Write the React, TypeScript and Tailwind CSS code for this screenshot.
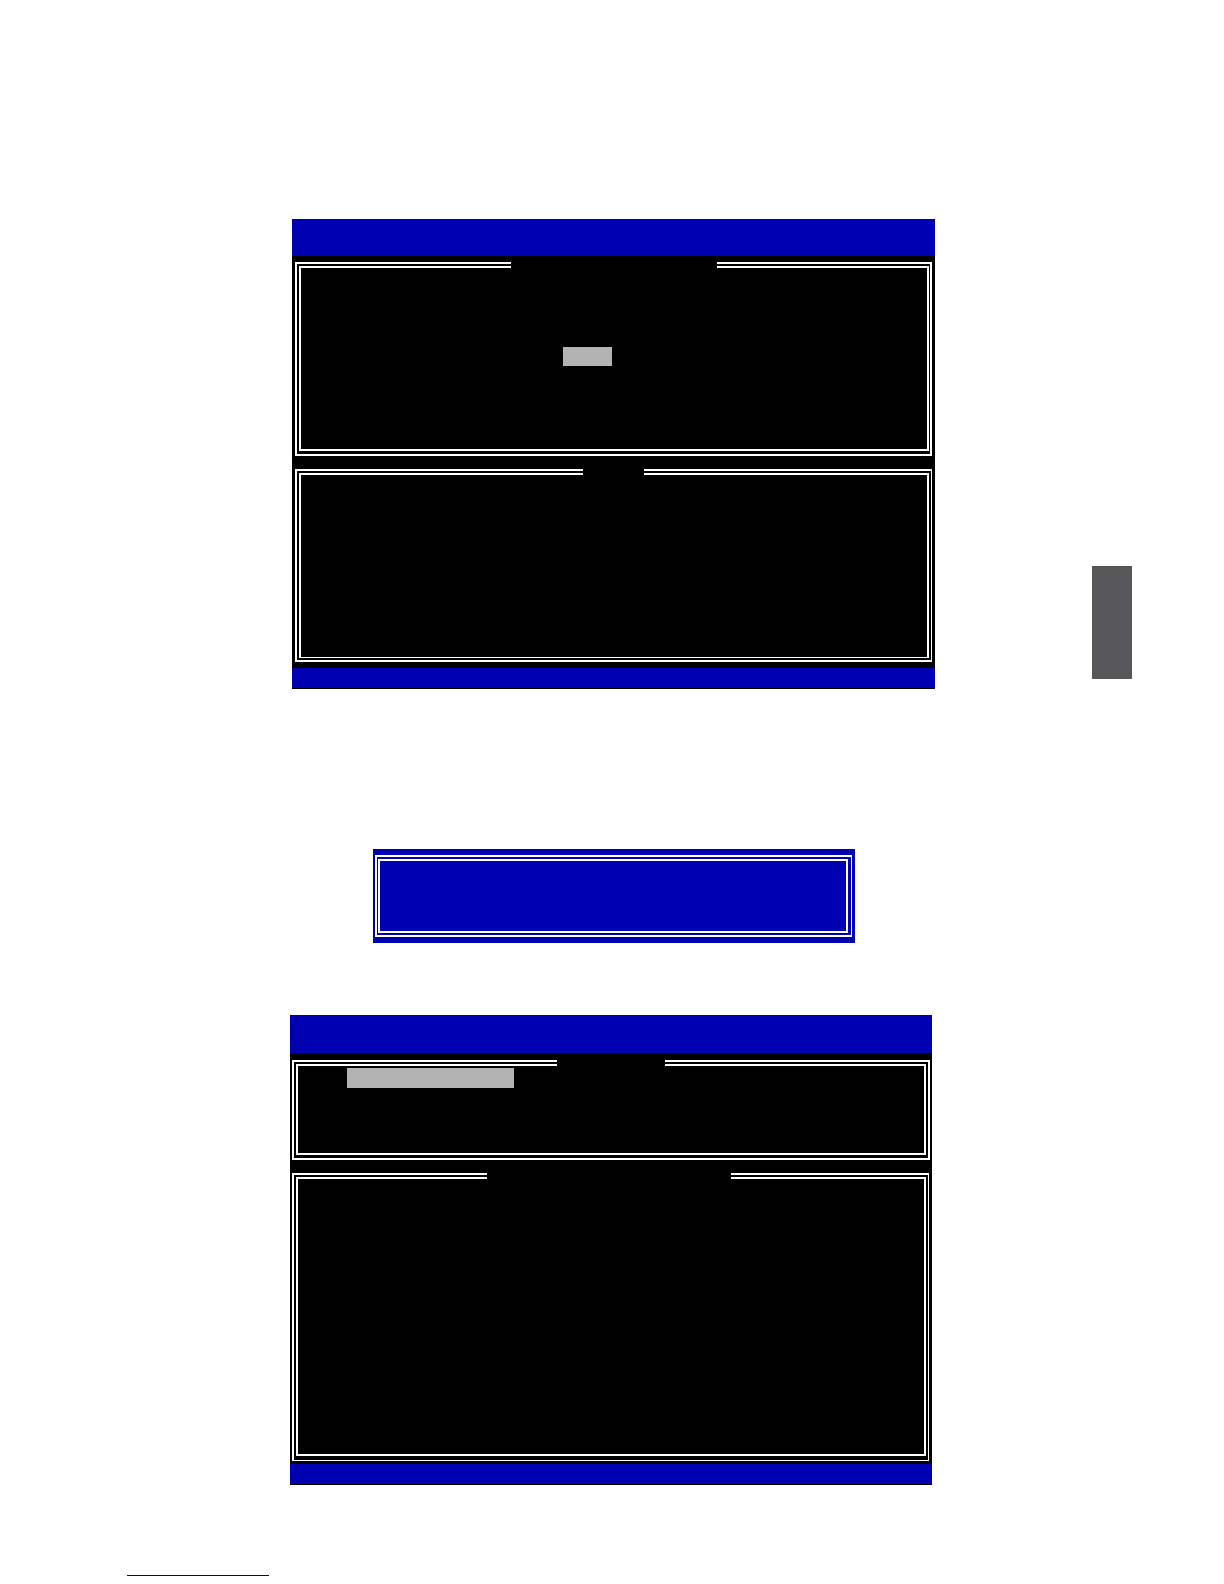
import type { ReactNode } from 'react';
import clsx from 'clsx';

type FrameProps = {
    className?: string;
    innerClassName?: string;
    notch?: string;
    children?: ReactNode;
};

// Double line text-mode frame, with an optional notch in the top line for a title
function Frame({ className, innerClassName, notch, children }: FrameProps) {
    return (
        <section className={clsx('relative border-white pt-0.5', className)}>
            <div className={clsx('h-full border-white', innerClassName)}>{children}</div>
            {notch && (
                <div className="absolute inset-x-0 -top-0.5 flex justify-center">
                    <div className={clsx('h-1.5 bg-black', notch)} />
                </div>
            )}
        </section>
    );
}

// Setup utility screen: blue title bar, black body and blue help bar
function Console({ headerClassName, bodyClassName, children }: {
    headerClassName: string;
    bodyClassName: string;
    children: ReactNode;
}) {
    return (
        <div className="min-w-0 flex-1 border-b border-black bg-black">
            <header className={clsx('bg-[#0000b3]', headerClassName)} />
            <div className={clsx('flex flex-col', bodyClassName)}>{children}</div>
            <footer className="bg-[#0000b3] pt-5" />
        </div>
    );
}

export default function App() {
    return (
        <main className="min-h-screen bg-white pt-[219px] pb-2 font-['Liberation_Sans',sans-serif]">
            <div className="flex items-start pl-[292px] pr-[92px]">
                <Console headerClassName="h-[37px]" bodyClassName="gap-[13px] px-[3px] py-1.5">
                    <Frame
                        className="h-[194px] border-2 pl-0.5 pr-px pb-[3px]"
                        innerClassName="border-2 pl-[262px] pt-[79px]"
                        notch="w-[206px]"
                    >
                        <div className="h-[19px] w-[49px] bg-[#b3b3b3]" />
                    </Frame>
                    <Frame
                        className="h-[193px] border-2 border-r px-0.5 pb-0.5"
                        innerClassName="border-2 border-b"
                        notch="mr-px w-[61px]"
                    />
                </Console>

                {/* Chapter tab on the page edge */}
                <aside className="ml-[157px] mt-[347px] h-[113px] w-10 shrink-0 bg-[#575759]" />
            </div>

            {/* Message box */}
            <div className="pl-[373px] pr-[369px] pt-40">
                <div className="bg-[#0000b3] pb-1.5 pl-0.5 pr-[3px] pt-1.5">
                    <Frame
                        className="h-[82px] border-2 border-r pl-px pr-[3px] pb-0.5"
                        innerClassName="border-2"
                    />
                </div>
            </div>

            <div className="flex pl-[290px] pr-[292px] pt-[72px]">
                <Console headerClassName="h-[38px]" bodyClassName="gap-[13px] px-0.5 pb-[3px] pt-[7px]">
                    <Frame
                        className="h-[100px] border-2 px-0.5 pb-[3px]"
                        innerClassName="border-2 pl-[49px] pt-0.5"
                        notch="w-[108px]"
                    >
                        <div className="h-5 w-[167px] bg-[#b3b3b3]" />
                    </Frame>
                    <Frame
                        className="mr-px h-[288px] border-2 border-b border-r px-0.5 pb-1"
                        innerClassName="border-2"
                        notch="mr-1 w-[244px]"
                    />
                </Console>
            </div>

            <a href="#" className="ml-[127px] mt-[90px] block w-[142px] border-b border-[#00008b]" />
        </main>
    );
}
